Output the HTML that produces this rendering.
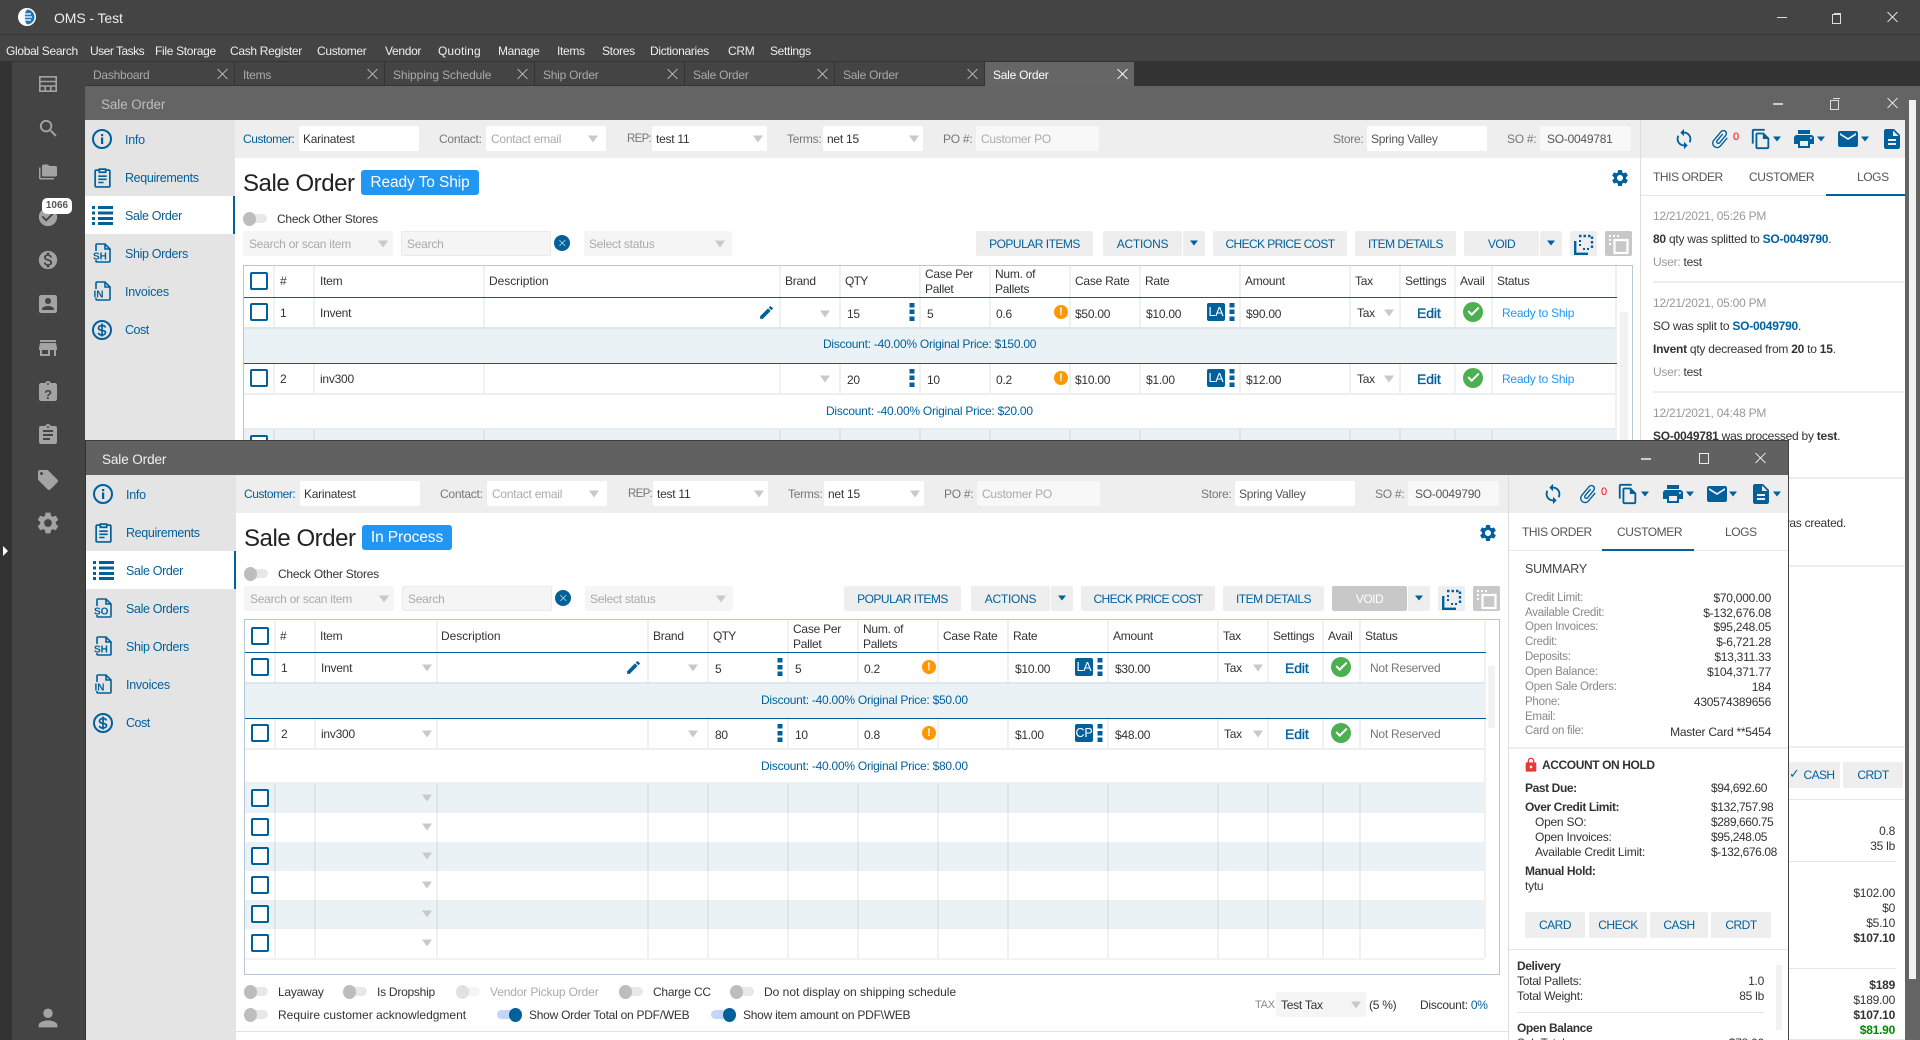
<!DOCTYPE html>
<html><head><meta charset="utf-8"><title>OMS - Test</title>
<style>
html,body{margin:0;padding:0;width:1920px;height:1040px;overflow:hidden;background:#fff}
body{position:relative;font:12px/16px "Liberation Sans",sans-serif;letter-spacing:-.25px;color:#333}
.r,.t,.ic,.a,.c,.d,.b,.k,.w,.g,.tg{position:absolute}
.t{white-space:nowrap;transform:translateY(-50%)}
.n{color:#00609c;font-size:12.5px}
.l{color:#777}.h{color:#aaa}.u{color:#00609c}
.m{color:#eee;letter-spacing:-.32px}
.tb{color:#aaa}
.ic{fill:currentColor;overflow:visible}
.bl{color:#00609c}.gy{color:#a3a3a3}
.inp{position:absolute;height:25px;background:#fff;border-radius:2px}
.a{width:0;height:0;border-left:5px solid transparent;border-right:5px solid transparent;border-top:7px solid #c9c9c9;transform:translate(-50%,-50%)}
.c{width:0;height:0;border-left:4px solid transparent;border-right:4px solid transparent;border-top:5px solid #00609c;transform:translate(-50%,-50%)}
.d{width:5px;height:18px;transform:translateX(-50%);background:repeating-linear-gradient(#00609c 0 4.5px,transparent 4.5px 6.75px)}
.b{height:25px;background:#eee;color:#00609c;display:flex;align-items:center;justify-content:center;border-radius:2px;letter-spacing:-.5px}
.k{width:14px;height:14px;border:2.5px solid #00609c;border-radius:2px;background:#fff}
.w{width:14px;height:14px;border-radius:50%;background:#ff9800;color:#fff;font:bold 11px/14px "Liberation Sans",sans-serif;text-align:center;letter-spacing:0}
.g{width:20px;height:20px;border-radius:50%;background:#4caf50}
.g:after{content:"";position:absolute;left:5px;top:5px;width:9px;height:4px;border-left:2.5px solid #fff;border-bottom:2.5px solid #fff;transform:rotate(-45deg)}
.la{position:absolute;width:18px;height:18px;background:#00609c;color:#fff;text-align:center;line-height:18px;border-radius:2px;font-size:12.5px;letter-spacing:-.2px}
.tg{width:24px;height:9px;background:#e8e8e8;border-radius:5px}
.tg:after{content:"";position:absolute;left:0;top:-2.5px;width:13px;height:14px;border-radius:50%;background:#bdbdbd}
.on{background:#c5d5f8}.on:after{left:12px;background:#00609c}
.off{opacity:.45}
.v{position:absolute;top:0;bottom:0;width:1.5px;background:rgba(0,0,0,.055)}
.x{position:absolute;width:10px;height:10px;transform:translate(-50%,-50%)}
.x:before,.x:after{content:"";position:absolute;left:4.5px;top:-2px;width:1px;height:14px;background:currentColor}
.x:before{transform:rotate(45deg)}.x:after{transform:rotate(-45deg)}
.e{color:#00609c;font-size:14px;letter-spacing:-.1px;-webkit-text-stroke:.35px #00609c}
.btxt{font-weight:bold}
.dc{color:#00609c}
.sv{color:#888;font-size:11.5px}
.pt{color:#555;letter-spacing:-.42px}
.vl{letter-spacing:-.4px}
</style></head><body>
<svg width="0" height="0" style="position:absolute">
<symbol id="sync" viewBox="0 0 24 24"><path d="M12 4V1L8 5l4 4V6c3.31 0 6 2.69 6 6 0 1.01-.25 1.97-.7 2.8l1.46 1.46C19.54 15.03 20 13.57 20 12c0-4.42-3.58-8-8-8zm0 14c-3.31 0-6-2.69-6-6 0-1.01.25-1.97.7-2.8L5.24 7.74C4.46 8.97 4 10.43 4 12c0 4.42 3.58 8 8 8v3l4-4-4-4v3z"/></symbol>
<symbol id="clip" viewBox="0 0 24 24"><path transform="rotate(40 12 12)" d="M16.5 6v11.5c0 2.21-1.79 4-4 4s-4-1.79-4-4V5c0-1.38 1.12-2.5 2.5-2.5s2.5 1.12 2.5 2.5v10.5c0 .55-.45 1-1 1s-1-.45-1-1V6H10v9.5c0 1.38 1.12 2.5 2.5 2.5s2.5-1.12 2.5-2.5V5c0-2.21-1.79-4-4-4S7 2.79 7 5v12.5c0 3.04 2.46 5.5 5.5 5.5s5.5-2.46 5.5-5.5V6h-1.5z"/></symbol>
<symbol id="copy" viewBox="0 0 24 24"><path d="M16 1H4c-1.1 0-2 .9-2 2v14h2V3h12V1zm-1 4H8c-1.1 0-1.99.9-1.99 2L6 21c0 1.1.89 2 1.99 2H19c1.1 0 2-.9 2-2V11l-6-6zM8 21V7h6v5h5v9H8z"/></symbol>
<symbol id="print" viewBox="0 0 24 24"><path d="M19 8H5c-1.66 0-3 1.34-3 3v6h4v4h12v-4h4v-6c0-1.66-1.34-3-3-3zm-3 11H8v-5h8v5zm3-7c-.55 0-1-.45-1-1s.45-1 1-1 1 .45 1 1-.45 1-1 1zm-1-9H6v4h12V3z"/></symbol>
<symbol id="mail" viewBox="0 0 24 24"><path d="M20 4H4c-1.1 0-1.99.9-1.99 2L2 18c0 1.1.9 2 2 2h16c1.1 0 2-.9 2-2V6c0-1.1-.9-2-2-2zm0 4l-8 5-8-5V6l8 5 8-5v2z"/></symbol>
<symbol id="doc" viewBox="0 0 24 24"><path d="M14 2H6c-1.1 0-1.99.9-1.99 2L4 20c0 1.1.89 2 1.99 2H18c1.1 0 2-.9 2-2V8l-6-6zm2 16H8v-2h8v2zm0-4H8v-2h8v2zm-3-5V3.5L18.5 9H13z"/></symbol>
<symbol id="gear" viewBox="0 0 24 24"><path d="M19.14 12.94c.04-.3.06-.61.06-.94 0-.32-.02-.64-.07-.94l2.03-1.58a.49.49 0 0 0 .12-.61l-1.92-3.32a.488.488 0 0 0-.59-.22l-2.39.96c-.5-.38-1.03-.7-1.62-.94l-.36-2.54a.484.484 0 0 0-.48-.41h-3.84c-.24 0-.43.17-.47.41l-.36 2.54c-.59.24-1.13.57-1.62.94l-2.39-.96c-.22-.08-.47 0-.59.22L2.74 8.87c-.12.21-.08.47.12.61l2.03 1.58c-.05.3-.09.63-.09.94s.02.64.07.94l-2.03 1.58a.49.49 0 0 0-.12.61l1.92 3.32c.12.22.37.29.59.22l2.39-.96c.5.38 1.03.7 1.62.94l.36 2.54c.05.24.24.41.48.41h3.84c.24 0 .44-.17.47-.41l.36-2.54c.59-.24 1.13-.56 1.62-.94l2.39.96c.22.08.47 0 .59-.22l1.92-3.32c.12-.22.07-.47-.12-.61l-2.01-1.58zM12 15.6c-1.98 0-3.6-1.62-3.6-3.6s1.62-3.6 3.6-3.6 3.6 1.62 3.6 3.6-1.62 3.6-3.6 3.6z"/></symbol>
<symbol id="search" viewBox="0 0 24 24"><path d="M15.5 14h-.79l-.28-.27A6.471 6.471 0 0 0 16 9.5 6.5 6.5 0 1 0 9.5 16c1.61 0 3.09-.59 4.23-1.57l.27.28v.79l5 4.99L20.49 19l-4.99-5zm-6 0C7.01 14 5 11.99 5 9.5S7.01 5 9.5 5 14 7.01 14 9.5 11.99 14 9.5 14z"/></symbol>
<symbol id="folder" viewBox="0 0 24 24"><path d="M2 6H0v5h.01L0 20c0 1.1.9 2 2 2h18v-2H2V6zm20-2h-8l-2-2H6c-1.1 0-1.99.9-1.99 2L4 16c0 1.1.9 2 2 2h16c1.1 0 2-.9 2-2V6c0-1.1-.9-2-2-2z"/></symbol>
<symbol id="chk" viewBox="0 0 24 24"><path d="M12 2C6.48 2 2 6.48 2 12s4.48 10 10 10 10-4.48 10-10S17.52 2 12 2zm-2 15l-5-5 1.41-1.41L10 14.17l7.59-7.59L19 8l-9 9z"/></symbol>
<symbol id="dol" viewBox="0 0 24 24"><path d="M12 2C6.48 2 2 6.48 2 12s4.48 10 10 10 10-4.48 10-10S17.52 2 12 2zm1.41 16.09V20h-2.67v-1.93c-1.71-.36-3.16-1.46-3.27-3.4h1.96c.1 1.05.82 1.87 2.65 1.87 1.96 0 2.4-.98 2.4-1.59 0-.83-.44-1.61-2.67-2.14-2.48-.6-4.18-1.62-4.18-3.67 0-1.72 1.39-2.84 3.11-3.21V4h2.67v1.95c1.86.45 2.79 1.86 2.85 3.39H14.3c-.05-1.11-.64-1.87-2.22-1.87-1.5 0-2.4.68-2.4 1.64 0 .84.65 1.39 2.67 1.91s4.18 1.39 4.18 3.91c-.01 1.83-1.38 2.83-3.12 3.16z"/></symbol>
<symbol id="cont" viewBox="0 0 24 24"><path d="M19 3H5c-1.1 0-2 .9-2 2v14c0 1.1.9 2 2 2h14c1.1 0 2-.9 2-2V5c0-1.1-.9-2-2-2zm-7 3c1.66 0 3 1.34 3 3s-1.34 3-3 3-3-1.34-3-3 1.34-3 3-3zm6 12H6v-1c0-2 4-3.1 6-3.1s6 1.1 6 3.1v1z"/></symbol>
<symbol id="store" viewBox="0 0 24 24"><path d="M20 4H4v2h16V4zm1 10v-2l-1-5H4l-1 5v2h1v6h10v-6h4v6h2v-6h1zm-9 4H6v-4h6v4z"/></symbol>
<symbol id="cb" viewBox="0 0 24 24"><path d="M19 3h-4.18C14.4 1.84 13.3 1 12 1c-1.3 0-2.4.84-2.82 2H5c-1.1 0-2 .9-2 2v14c0 1.1.9 2 2 2h14c1.1 0 2-.9 2-2V5c0-1.1-.9-2-2-2zm-7 0c.55 0 1 .45 1 1s-.45 1-1 1-1-.45-1-1 .45-1 1-1zm2 14H7v-2h7v2zm3-4H7v-2h10v2zm0-4H7V7h10v2z"/></symbol>
<symbol id="cq" viewBox="0 0 24 24"><path d="M19 3h-4.18C14.4 1.84 13.3 1 12 1c-1.3 0-2.4.84-2.82 2H5c-1.1 0-2 .9-2 2v14c0 1.1.9 2 2 2h14c1.1 0 2-.9 2-2V5c0-1.1-.9-2-2-2zm-7 0c.55 0 1 .45 1 1s-.45 1-1 1-1-.45-1-1 .45-1 1-1z"/></symbol>
<symbol id="tag" viewBox="0 0 24 24"><path d="M21.41 11.58l-9-9C12.05 2.22 11.55 2 11 2H4c-1.1 0-2 .9-2 2v7c0 .55.22 1.05.59 1.42l9 9c.36.36.86.58 1.41.58.55 0 1.05-.22 1.41-.59l7-7c.37-.36.59-.86.59-1.41 0-.55-.23-1.06-.59-1.42zM5.5 7C4.67 7 4 6.33 4 5.5S4.67 4 5.5 4 7 4.67 7 5.5 6.33 7 5.5 7z"/></symbol>
<symbol id="per" viewBox="0 0 24 24"><path d="M12 12c2.21 0 4-1.79 4-4s-1.79-4-4-4-4 1.79-4 4 1.79 4 4 4zm0 2c-2.67 0-8 1.34-8 4v2h16v-2c0-2.66-5.33-4-8-4z"/></symbol>
<symbol id="pen" viewBox="0 0 24 24"><path d="M3 17.25V21h3.75L17.81 9.94l-3.75-3.75L3 17.25zM20.71 7.04a1 1 0 0 0 0-1.41l-2.34-2.34a1 1 0 0 0-1.41 0l-1.83 1.83 3.75 3.75 1.83-1.83z"/></symbol>
<symbol id="lock" viewBox="0 0 24 24"><path d="M18 8h-1V6c0-2.76-2.24-5-5-5S7 3.24 7 6v2H6c-1.1 0-2 .9-2 2v10c0 1.1.9 2 2 2h12c1.1 0 2-.9 2-2V10c0-1.1-.9-2-2-2zm-6 9c-1.1 0-2-.9-2-2s.9-2 2-2 2 .9 2 2-.9 2-2 2zm3.1-9H8.9V6c0-1.71 1.39-3.1 3.1-3.1 1.71 0 3.1 1.39 3.1 3.1v2z"/></symbol>
<symbol id="info" viewBox="0 0 20 20"><circle cx="10" cy="10" r="9" fill="none" stroke="currentColor" stroke-width="2"/><rect x="9" y="8.5" width="2.2" height="6.5"/><rect x="9" y="5" width="2.2" height="2.2"/></symbol>
<symbol id="req" viewBox="0 0 16 20"><path fill="none" stroke="currentColor" stroke-width="1.6" d="M5 3H2a1 1 0 0 0-1 1v14a1 1 0 0 0 1 1h12a1 1 0 0 0 1-1V4a1 1 0 0 0-1-1h-3M5 2h6v3H5z"/><path d="M4 8h8v1.5H4zM4 11h8v1.5H4zM4 14h5v1.5H4z"/></symbol>
<symbol id="list" viewBox="0 0 21 20"><path d="M0 1h3v3H0zM6 1h15v3H6zM0 6.5h3v3H0zM6 6.5h15v3H6zM0 12h3v3H0zM6 12h15v3H6zM0 17h3v3H0zM6 17h15v3H6z"/></symbol>
<symbol id="fd" viewBox="0 0 17 20"><path fill="none" stroke="currentColor" stroke-width="1.6" d="M2 8V2a1 1 0 0 1 1-1h8l5 5v12a1 1 0 0 1-1 1H3a1 1 0 0 1-1-1v-1M11 1v5h5"/></symbol>
<symbol id="cost" viewBox="0 0 20 20"><circle cx="10" cy="10" r="9" fill="none" stroke="currentColor" stroke-width="2"/><path fill="none" stroke="currentColor" stroke-width="1.7" d="M13.5 7.5C13 6 11.5 5.5 10 5.5 8 5.500 6.500 6.500 6.500 8c0 3.500 7 1.500 7 4.500 0 1.500-1.500 2.500-3.500 2.500-1.800 0-3.200-.8-3.700-2.200M10 3.500v13"/></symbol>
<symbol id="sel" viewBox="0 0 27 25"><path fill="none" stroke="#00609c" stroke-width="2.400" stroke-dasharray="2.500 2" d="M9 5h13v13"/><path fill="none" stroke="#00609c" stroke-width="2.400" d="M5.200 10v12.800H18"/><path fill="#00609c" d="M9 9h2v2H9zM9 13h2v2H9zM13 17h2v2h-2zM17 17h2v2h-2z"/></symbol>
<symbol id="sel2" viewBox="0 0 27 25"><path fill="#fff" d="M4 4h2v2H4zM8 4h2v2H8zM12 4h2v2h-2zM4 8h2v2H4zM4 12h2v2H4z"/><path fill="none" stroke="#fff" stroke-width="2.200" d="M9.500 9h13v13h-13z"/></symbol>
</svg>

<!-- App chrome -->
<div class="r" style="left:0;top:0;width:1920px;height:62px;background:#444"></div>
<div class="r" style="left:0;top:34px;width:1920px;height:1px;background:#333"></div>
<svg class="ic" style="left:18px;top:8px;width:18px;height:18px" viewBox="0 0 18 18"><circle cx="9" cy="9" r="9" fill="#fff"/><path d="M9 1.500a7.500 7.500 0 0 1 0 15 9 9 0 0 1-2-7.500 9 9 0 0 1 2-7.500z" fill="#1b78c2"/><path d="M7 6h6M6 9h8M7 12h6" stroke="#fff" stroke-width="1.200"/></svg>
<div class="t" style="left:54px;top:18px;font-size:14px;color:#eee;letter-spacing:-.1px">OMS - Test</div>
<div class="t m" style="left:6px;top:51px">Global Search</div>
<div class="t m" style="left:90px;top:51px;letter-spacing:-.5px">User Tasks</div>
<div class="t m" style="left:155px;top:51px">File Storage</div>
<div class="t m" style="left:230px;top:51px">Cash Register</div>
<div class="t m" style="left:317px;top:51px">Customer</div>
<div class="t m" style="left:385px;top:51px">Vendor</div>
<div class="t m" style="left:438px;top:51px;letter-spacing:.1px">Quoting</div>
<div class="t m" style="left:498px;top:51px">Manage</div>
<div class="t m" style="left:557px;top:51px">Items</div>
<div class="t m" style="left:602px;top:51px">Stores</div>
<div class="t m" style="left:650px;top:51px">Dictionaries</div>
<div class="t m" style="left:728px;top:51px">CRM</div>
<div class="t m" style="left:770px;top:51px">Settings</div>
<div class="r" style="left:1777px;top:16.500px;width:10px;height:1.500px;background:#ddd"></div>
<div class="r" style="left:1832px;top:14px;width:7px;height:8px;border:1px solid #ddd;background:#444"></div>
<div class="r" style="left:1834px;top:12.500px;width:7px;height:1px;background:#ddd"></div>
<div class="x" style="left:1892px;top:17px;color:#eee"></div>

<!-- Tab strip -->
<div class="r" style="left:0;top:61px;width:1920px;height:25px;background:#333"></div>
<div class="r" style="left:85px;top:62px;width:149px;height:23px;background:#444"></div>
<div class="r" style="left:235px;top:62px;width:149px;height:23px;background:#444"></div>
<div class="r" style="left:385px;top:62px;width:149px;height:23px;background:#444"></div>
<div class="r" style="left:535px;top:62px;width:149px;height:23px;background:#444"></div>
<div class="r" style="left:685px;top:62px;width:149px;height:23px;background:#444"></div>
<div class="r" style="left:835px;top:62px;width:149px;height:23px;background:#444"></div>
<div class="r" style="left:985px;top:62px;width:149px;height:24px;background:#666"></div>
<div class="t tb" style="left:93px;top:75px">Dashboard</div><div class="x" style="left:222px;top:74px;color:#bbb"></div>
<div class="t tb" style="left:243px;top:75px">Items</div><div class="x" style="left:372px;top:74px;color:#bbb"></div>
<div class="t tb" style="left:393px;top:75px;letter-spacing:-.1px">Shipping Schedule</div><div class="x" style="left:522px;top:74px;color:#bbb"></div>
<div class="t tb" style="left:543px;top:75px">Ship Order</div><div class="x" style="left:672px;top:74px;color:#bbb"></div>
<div class="t tb" style="left:693px;top:75px">Sale Order</div><div class="x" style="left:822px;top:74px;color:#bbb"></div>
<div class="t tb" style="left:843px;top:75px">Sale Order</div><div class="x" style="left:972px;top:74px;color:#bbb"></div>
<div class="t" style="left:993px;top:75px;color:#fff">Sale Order</div><div class="x" style="left:1122px;top:74px;color:#fff"></div>

<!-- Left rail -->
<div class="r" style="left:0;top:61px;width:12px;height:979px;background:#333"></div>
<div class="r" style="left:12px;top:61px;width:73px;height:979px;background:#444"></div>
<div class="r" style="left:12px;top:61px;width:73px;height:1px;background:#333"></div>
<svg class="ic gy" style="left:39px;top:76px;width:18px;height:16px" viewBox="0 0 18 16"><path fill="none" stroke="currentColor" stroke-width="1.600" d="M.8.8h16.400v14.400H.8zM.8 5.500h16.400M.8 10h16.400M6.200 10v5M11.800 10v5"/></svg>
<svg class="ic gy" style="left:37px;top:117px;width:23px;height:23px"><use href="#search"/></svg>
<svg class="ic gy" style="left:39px;top:163px;width:18px;height:18px"><use href="#folder"/></svg>
<svg class="ic gy" style="left:37px;top:206px;width:22px;height:22px"><use href="#chk"/></svg>
<div class="r" style="left:42px;top:198px;width:30px;height:16px;background:#fff;border-radius:5px;color:#555;font-size:10px;line-height:16px;text-align:center;font-weight:bold;letter-spacing:0">1066</div>
<svg class="ic gy" style="left:37px;top:249px;width:22px;height:22px"><use href="#dol"/></svg>
<svg class="ic gy" style="left:36px;top:292px;width:24px;height:24px"><use href="#cont"/></svg>
<svg class="ic gy" style="left:36px;top:336px;width:24px;height:24px"><use href="#store"/></svg>
<svg class="ic gy" style="left:36px;top:380px;width:24px;height:24px" viewBox="0 0 24 24"><use href="#cq" width="24" height="24"/><text x="12" y="19" font-size="13" font-weight="bold" text-anchor="middle" font-family="Liberation Sans" fill="#444">?</text></svg>
<svg class="ic gy" style="left:36px;top:423px;width:24px;height:24px"><use href="#cb"/></svg>
<svg class="ic gy" style="left:36px;top:468px;width:24px;height:24px"><use href="#tag"/></svg>
<svg class="ic gy" style="left:35px;top:510px;width:26px;height:26px"><use href="#gear"/></svg>
<svg class="ic gy" style="left:34px;top:1004px;width:28px;height:28px"><use href="#per"/></svg>
<div class="r" style="left:3px;top:546px;width:0;height:0;border-left:5px solid #fff;border-top:5px solid transparent;border-bottom:5px solid transparent"></div>

<!-- WINDOW 1 -->
<div class="r" style="left:85px;top:86px;width:1820px;height:34px;background:#646464"></div>
<div class="t" style="left:101px;top:105px;font-size:13.500px;color:#bdbdbd;letter-spacing:-.1px">Sale Order</div>
<div class="r" style="left:1773px;top:103px;width:10px;height:1.500px;background:#ccc"></div>
<div class="r" style="left:1830px;top:100px;width:7px;height:8px;border:1px solid #ddd"></div>
<div class="r" style="left:1833px;top:98px;width:7px;height:1px;background:#ddd"></div>
<div class="x" style="left:1892px;top:103px;color:#eee"></div>
<div class="r" style="left:1905px;top:86px;width:15px;height:954px;background:#646464"></div>
<div class="r" style="left:1909px;top:100px;width:7px;height:879px;background:#f2f2f2"></div>
<div class="r" style="left:85px;top:120px;width:150px;height:340px;background:#e4e4e4"></div>
<div class="r" style="left:85px;top:196px;width:150px;height:38px;background:#fff"></div>
<div class="r" style="left:233px;top:196px;width:2px;height:38px;background:#00609c"></div>
<svg class="ic bl" style="left:92px;top:129px;width:20px;height:20px"><use href="#info"/></svg>
<div class="t n" style="left:125px;top:140px">Info</div>
<svg class="ic bl" style="left:94px;top:167px;width:17px;height:21px"><use href="#req"/></svg>
<div class="t n" style="left:125px;top:178px;letter-spacing:-.35px">Requirements</div>
<svg class="ic bl" style="left:92px;top:205px;width:21px;height:20px"><use href="#list"/></svg>
<div class="t n" style="left:125px;top:216px;letter-spacing:-.35px">Sale Order</div>
<svg class="ic bl" style="left:94px;top:243px;width:17px;height:20px" viewBox="0 0 17 20"><use href="#fd" width="17" height="20"/><rect x="-1" y="8" width="13" height="9" fill="#e4e4e4"/><text x="-1" y="16.500" font-size="10" font-weight="bold" letter-spacing="0" font-family="Liberation Sans" fill="#00609c">SH</text></svg>
<div class="t n" style="left:125px;top:254px;letter-spacing:-.35px">Ship Orders</div>
<svg class="ic bl" style="left:94px;top:281px;width:17px;height:20px" viewBox="0 0 17 20"><use href="#fd" width="17" height="20"/><rect x="-1" y="8" width="13" height="9" fill="#e4e4e4"/><text x="-.5" y="16.500" font-size="10" font-weight="bold" letter-spacing="0" font-family="Liberation Sans" fill="#00609c">IN</text></svg>
<div class="t n" style="left:125px;top:292px">Invoices</div>
<svg class="ic bl" style="left:92px;top:320px;width:20px;height:20px"><use href="#cost"/></svg>
<div class="t n" style="left:125px;top:330px;letter-spacing:-.5px">Cost</div>

<div class="r" style="left:235px;top:120px;width:1670px;height:38px;background:#eee"></div>
<div class="r" style="left:235px;top:158px;width:1670px;height:302px;background:#fff"></div>
<div class="r" style="left:1640px;top:120px;width:1px;height:340px;background:#dcdcdc"></div>
<div class="t u" style="left:243px;top:139px;letter-spacing:-.45px">Customer:</div>
<div class="inp" style="left:299px;top:126px;width:120px"></div>
<div class="t" style="left:303px;top:139px">Karinatest</div>
<div class="t l" style="left:439px;top:139px">Contact:</div>
<div class="inp" style="left:486px;top:126px;width:120px"></div>
<div class="t h" style="left:491px;top:139px">Contact email</div><div class="a" style="left:593px;top:139px"></div>
<div class="t l" style="left:627px;top:139px;letter-spacing:-.7px;font-size:11.500px">REP:</div>
<div class="inp" style="left:652px;top:126px;width:115px"></div>
<div class="t" style="left:656px;top:139px">test 11</div><div class="a" style="left:758px;top:139px"></div>
<div class="t l" style="left:787px;top:139px">Terms:</div>
<div class="inp" style="left:823px;top:126px;width:100px"></div>
<div class="t" style="left:827px;top:139px">net 15</div><div class="a" style="left:914px;top:139px"></div>
<div class="t l" style="left:943px;top:139px">PO #:</div>
<div class="inp" style="left:976px;top:126px;width:123px;background:#f8f8f8"></div>
<div class="t h" style="left:981px;top:139px">Customer PO</div>
<div class="t l" style="left:1333px;top:139px">Store:</div>
<div class="inp" style="left:1367px;top:126px;width:120px"></div>
<div class="t" style="left:1371px;top:139px;color:#555">Spring Valley</div>
<div class="t l" style="left:1507px;top:139px">SO #:</div>
<div class="inp" style="left:1540px;top:126px;width:91px;background:#f8f8f8"></div>
<div class="t" style="left:1547px;top:139px;color:#555">SO-0049781</div>
<svg class="ic bl" style="left:1673px;top:128px;width:22px;height:22px"><use href="#sync"/></svg>
<svg class="ic bl" style="left:1709px;top:128px;width:22px;height:22px"><use href="#clip"/></svg>
<div class="t" style="left:1733px;top:137px;color:#f00;font-size:11px">0</div>
<svg class="ic bl" style="left:1750px;top:128px;width:22px;height:22px"><use href="#copy"/></svg><div class="c" style="left:1777px;top:139px"></div>
<svg class="ic bl" style="left:1792px;top:127px;width:24px;height:24px"><use href="#print"/></svg><div class="c" style="left:1821px;top:139px"></div>
<svg class="ic bl" style="left:1836px;top:126px;width:24px;height:26px"><use href="#mail"/></svg><div class="c" style="left:1865px;top:139px"></div>
<svg class="ic bl" style="left:1880px;top:127px;width:24px;height:24px"><use href="#doc"/></svg>

<div class="t" style="left:243px;top:184px;font-size:24px;line-height:28px;letter-spacing:-.45px;color:#222">Sale Order</div>
<div class="r" style="left:361px;top:170px;width:118px;height:25px;background:#2196f3;border-radius:3px;color:#fff;font-size:15.500px;line-height:26px;text-align:center;letter-spacing:-.1px">Ready To Ship</div>
<svg class="ic bl" style="left:1610px;top:168px;width:20px;height:20px"><use href="#gear"/></svg>
<div class="tg" style="left:243px;top:214px"></div>
<div class="t" style="left:277px;top:219px">Check Other Stores</div>
<div class="r" style="left:243px;top:231px;width:150px;height:25px;background:#f5f5f5;border-radius:2px"></div>
<div class="t h" style="left:249px;top:244px">Search or scan item</div><div class="a" style="left:383px;top:244px"></div>
<div class="r" style="left:401px;top:231px;width:148px;height:23px;background:#f5f5f5;border:1px solid #eaeaea;border-radius:2px"></div>
<div class="t h" style="left:407px;top:244px">Search</div>
<div class="r" style="left:554px;top:235px;width:16px;height:16px;border-radius:50%;background:#00609c"></div><div class="x" style="left:562px;top:243px;color:#fff;transform:translate(-50%,-50%) scale(.6)"></div>
<div class="r" style="left:584px;top:231px;width:148px;height:25px;background:#f5f5f5;border-radius:2px"></div>
<div class="t h" style="left:589px;top:244px">Select status</div><div class="a" style="left:720px;top:244px"></div>
<div class="b" style="left:976px;top:231px;width:117px">POPULAR ITEMS</div>
<div class="b" style="left:1103px;top:231px;width:79px;letter-spacing:-.25px">ACTIONS</div>
<div class="b" style="left:1183px;top:231px;width:22px"><span class="c" style="left:11px;top:12px"></span></div>
<div class="b" style="left:1213px;top:231px;width:134px;letter-spacing:-.6px">CHECK PRICE COST</div>
<div class="b" style="left:1355px;top:231px;width:101px">ITEM DETAILS</div>
<div class="b" style="left:1464px;top:231px;width:75px">VOID</div>
<div class="b" style="left:1540px;top:231px;width:22px"><span class="c" style="left:11px;top:12px"></span></div>
<div class="b" style="left:1570px;top:231px;width:27px"><svg class="ic" style="left:0;top:0;width:27px;height:25px"><use href="#sel"/></svg></div>
<div class="b" style="left:1605px;top:231px;width:27px;background:#c8c8c8"><svg class="ic" style="left:0;top:0;width:27px;height:25px"><use href="#sel2"/></svg></div>

<!-- table 1 -->
<div class="r" style="left:243px;top:265px;width:1388px;height:195px;border:1px solid #b4c8da;border-bottom:0"></div>
<div class="r" style="left:244px;top:428px;width:1371px;height:32px;background:#ebf2f6"></div>
<div class="r" style="left:0;top:266px;width:1920px;height:174px"><i class="v" style="left:273px"></i><i class="v" style="left:313px"></i><i class="v" style="left:483px"></i><i class="v" style="left:779px"></i><i class="v" style="left:839px"></i><i class="v" style="left:919px"></i><i class="v" style="left:989px"></i><i class="v" style="left:1069px"></i><i class="v" style="left:1139px"></i><i class="v" style="left:1239px"></i><i class="v" style="left:1349px"></i><i class="v" style="left:1399px"></i><i class="v" style="left:1454px"></i><i class="v" style="left:1491px"></i><i class="v" style="left:1615px"></i></div>
<div class="r" style="left:244px;top:329px;width:1371px;height:34px;background:#ebf2f6"></div>
<div class="r" style="left:244px;top:395px;width:1371px;height:33px;background:#fff"></div>
<div class="r" style="left:244px;top:297px;width:1373px;height:1px;background:#00609c"></div>
<div class="r" style="left:244px;top:363px;width:1373px;height:1px;background:#00609c"></div>
<div class="r" style="left:244px;top:327px;width:1371px;height:1.500px;background:#dfe6ec"></div>
<div class="r" style="left:244px;top:393px;width:1371px;height:1.500px;background:#eceff2"></div>
<div class="r" style="left:244px;top:428px;width:1371px;height:1.500px;background:#e6ebf0"></div>
<div class="r" style="left:1620px;top:312px;width:8px;height:148px;background:#f2f2f2"></div>
<div class="k" style="left:250px;top:272px"></div><div class="k" style="left:250px;top:303px"></div><div class="k" style="left:250px;top:369px"></div><div class="k" style="left:250px;top:435px"></div>
<div class="t" style="left:280px;top:281px">#</div><div class="t" style="left:320px;top:281px">Item</div><div class="t" style="left:489px;top:281px;letter-spacing:-.05px">Description</div><div class="t" style="left:785px;top:281px">Brand</div><div class="t" style="left:845px;top:281px;letter-spacing:-.7px">QTY</div><div class="t" style="left:925px;top:274px">Case Per</div><div class="t" style="left:925px;top:289px">Pallet</div><div class="t" style="left:995px;top:274px">Num. of</div><div class="t" style="left:995px;top:289px">Pallets</div><div class="t" style="left:1075px;top:281px">Case Rate</div><div class="t" style="left:1145px;top:281px">Rate</div><div class="t" style="left:1245px;top:281px">Amount</div><div class="t" style="left:1355px;top:281px">Tax</div><div class="t" style="left:1405px;top:281px">Settings</div><div class="t" style="left:1460px;top:281px">Avail</div><div class="t" style="left:1497px;top:281px">Status</div>
<div class="t" style="left:280px;top:313px">1</div><div class="t" style="left:320px;top:313px">Invent</div>
<svg class="ic bl" style="left:758px;top:304px;width:17px;height:17px"><use href="#pen"/></svg>
<div class="a" style="left:825px;top:314px"></div>
<div class="t" style="left:847px;top:314px">15</div><div class="d" style="left:912px;top:303px"></div>
<div class="t" style="left:927px;top:314px">5</div><div class="t" style="left:996px;top:314px">0.6</div><div class="w" style="left:1054px;top:305px">!</div>
<div class="t" style="left:1075px;top:314px">$50.00</div><div class="t" style="left:1146px;top:314px">$10.00</div><div class="la" style="left:1207px;top:303px">LA</div><div class="d" style="left:1232px;top:303px"></div><div class="t" style="left:1246px;top:314px">$90.00</div>
<div class="t" style="left:1357px;top:313px">Tax</div><div class="a" style="left:1389px;top:313px"></div><div class="t e" style="left:1417px;top:313px">Edit</div><div class="g" style="left:1463px;top:302px"></div><div class="t" style="left:1502px;top:313px;color:#2196f3">Ready to Ship</div>
<div class="t dc" style="left:823px;top:344px">Discount: -40.00% Original Price: $150.00</div>
<div class="t" style="left:280px;top:379px">2</div><div class="t" style="left:320px;top:379px">inv300</div>
<div class="a" style="left:825px;top:379px"></div>
<div class="t" style="left:847px;top:380px">20</div><div class="d" style="left:912px;top:369px"></div>
<div class="t" style="left:927px;top:380px">10</div><div class="t" style="left:996px;top:380px">0.2</div><div class="w" style="left:1054px;top:371px">!</div>
<div class="t" style="left:1075px;top:380px">$10.00</div><div class="t" style="left:1146px;top:380px">$1.00</div><div class="la" style="left:1207px;top:369px">LA</div><div class="d" style="left:1232px;top:369px"></div><div class="t" style="left:1246px;top:380px">$12.00</div>
<div class="t" style="left:1357px;top:379px">Tax</div><div class="a" style="left:1389px;top:379px"></div><div class="t e" style="left:1417px;top:379px">Edit</div><div class="g" style="left:1463px;top:368px"></div><div class="t" style="left:1502px;top:379px;color:#2196f3">Ready to Ship</div>
<div class="t dc" style="left:826px;top:411px">Discount: -40.00% Original Price: $20.00</div>

<!-- right panel win 1 -->
<div class="t pt" style="left:1653px;top:177px">THIS ORDER</div>
<div class="t pt" style="left:1749px;top:177px">CUSTOMER</div>
<div class="t pt" style="left:1857px;top:177px">LOGS</div>
<div class="r" style="left:1641px;top:195px;width:264px;height:1px;background:#e6e6e6"></div>
<div class="r" style="left:1826px;top:194px;width:79px;height:2px;background:#00609c"></div>
<div class="t" style="left:1653px;top:216px;color:#999">12/21/2021, 05:26 PM</div>
<div class="t" style="left:1653px;top:239px"><b>80</b> qty was splitted to <b class="u">SO-0049790</b>.</div>
<div class="t" style="left:1653px;top:262px"><span style="color:#999">User:</span> test</div>
<div class="r" style="left:1653px;top:281px;width:252px;height:2px;background:#eee"></div>
<div class="t" style="left:1653px;top:303px;color:#999">12/21/2021, 05:00 PM</div>
<div class="t" style="left:1653px;top:326px">SO was split to <b class="u">SO-0049790</b>.</div>
<div class="t" style="left:1653px;top:349px"><b>Invent</b> qty decreased from <b>20</b> to <b>15</b>.</div>
<div class="t" style="left:1653px;top:372px"><span style="color:#999">User:</span> test</div>
<div class="r" style="left:1653px;top:391px;width:252px;height:2px;background:#eee"></div>
<div class="t" style="left:1653px;top:413px;color:#999">12/21/2021, 04:48 PM</div>
<div class="t" style="left:1653px;top:436px"><b>SO-0049781</b> was processed by <b>test</b>.</div>
<div class="r" style="left:1653px;top:477px;width:252px;height:2px;background:#eee"></div>
<div class="t" style="right:74px;top:523px">SO-0049781 was created.</div>
<div class="r" style="left:1653px;top:565px;width:252px;height:2px;background:#eee"></div>
<div class="r" style="left:1653px;top:746px;width:252px;height:2px;background:#eee"></div>
<div class="b" style="left:1780px;top:762px;width:60px;height:26px"><span style="margin-left:18px;letter-spacing:-.6px">CASH</span></div>
<div class="t u" style="left:1789px;top:774px;font-size:13px">✓</div>
<div class="b" style="left:1843px;top:762px;width:60px;height:26px">CRDT</div>
<div class="r" style="left:1653px;top:799px;width:252px;height:1px;background:#e6e6e6"></div>
<div class="t" style="right:25px;top:831px">0.8</div><div class="t" style="right:25px;top:846px">35 lb</div>
<div class="r" style="left:1653px;top:861px;width:243px;height:1px;background:#e6e6e6"></div>
<div class="t" style="right:25px;top:893px">$102.00</div><div class="t" style="right:25px;top:908px">$0</div><div class="t" style="right:25px;top:923px">$5.10</div><div class="t btxt" style="right:25px;top:938px">$107.10</div>
<div class="r" style="left:1653px;top:968px;width:243px;height:1px;background:#e6e6e6"></div>
<div class="t btxt" style="right:25px;top:985px">$189</div><div class="t" style="right:25px;top:1000px">$189.00</div><div class="t btxt" style="right:25px;top:1015px">$107.10</div><div class="t btxt" style="right:25px;top:1030px;color:#008a00">$81.90</div>
<div class="r" style="left:1653px;top:1039px;width:252px;height:1px;background:#e6e6e6"></div>

<!-- WINDOW 2 -->
<div class="r" style="left:86px;top:440px;width:1703px;height:600px;background:#fff"></div>
<div class="r" style="left:86px;top:440px;width:1703px;height:35px;background:#616161;border-top:1px solid #3c3c3c;box-sizing:border-box"></div>
<div class="r" style="left:1788px;top:440px;width:1px;height:600px;background:#444"></div>
<div class="r" style="left:85px;top:440px;width:1px;height:600px;background:#333"></div>
<div class="t" style="left:102px;top:460px;font-size:13.500px;color:#f0f0f0;letter-spacing:-.1px">Sale Order</div>
<div class="r" style="left:1641px;top:458px;width:10px;height:1.500px;background:#ccc"></div>
<div class="r" style="left:1699px;top:453px;width:8px;height:9px;border:1px solid #eee"></div>
<div class="x" style="left:1760px;top:458px;color:#eee"></div>
<div class="r" style="left:86px;top:475px;width:150px;height:565px;background:#e4e4e4"></div>
<div class="r" style="left:86px;top:551px;width:150px;height:38px;background:#fff"></div>
<div class="r" style="left:234px;top:551px;width:2px;height:38px;background:#00609c"></div>
<svg class="ic bl" style="left:93px;top:484px;width:20px;height:20px"><use href="#info"/></svg>
<div class="t n" style="left:126px;top:495px">Info</div>
<svg class="ic bl" style="left:95px;top:522px;width:17px;height:21px"><use href="#req"/></svg>
<div class="t n" style="left:126px;top:533px;letter-spacing:-.35px">Requirements</div>
<svg class="ic bl" style="left:93px;top:560px;width:21px;height:20px"><use href="#list"/></svg>
<div class="t n" style="left:126px;top:571px;letter-spacing:-.35px">Sale Order</div>
<svg class="ic bl" style="left:95px;top:598px;width:17px;height:20px" viewBox="0 0 17 20"><use href="#fd" width="17" height="20"/><rect x="-1" y="8" width="13" height="9" fill="#e4e4e4"/><text x="-1" y="16.500" font-size="10" font-weight="bold" letter-spacing="0" font-family="Liberation Sans" fill="#00609c">SO</text></svg>
<div class="t n" style="left:126px;top:609px;letter-spacing:-.35px">Sale Orders</div>
<svg class="ic bl" style="left:95px;top:636px;width:17px;height:20px" viewBox="0 0 17 20"><use href="#fd" width="17" height="20"/><rect x="-1" y="8" width="13" height="9" fill="#e4e4e4"/><text x="-1" y="16.500" font-size="10" font-weight="bold" letter-spacing="0" font-family="Liberation Sans" fill="#00609c">SH</text></svg>
<div class="t n" style="left:126px;top:647px;letter-spacing:-.35px">Ship Orders</div>
<svg class="ic bl" style="left:95px;top:674px;width:17px;height:20px" viewBox="0 0 17 20"><use href="#fd" width="17" height="20"/><rect x="-1" y="8" width="13" height="9" fill="#e4e4e4"/><text x="-.5" y="16.500" font-size="10" font-weight="bold" letter-spacing="0" font-family="Liberation Sans" fill="#00609c">IN</text></svg>
<div class="t n" style="left:126px;top:685px">Invoices</div>
<svg class="ic bl" style="left:93px;top:713px;width:20px;height:20px"><use href="#cost"/></svg>
<div class="t n" style="left:126px;top:723px;letter-spacing:-.5px">Cost</div>

<div class="r" style="left:236px;top:475px;width:1552px;height:38px;background:#eee"></div>
<div class="r" style="left:1508px;top:475px;width:1px;height:565px;background:#dcdcdc"></div>
<div class="t u" style="left:244px;top:494px;letter-spacing:-.45px">Customer:</div>
<div class="inp" style="left:300px;top:481px;width:120px"></div>
<div class="t" style="left:304px;top:494px">Karinatest</div>
<div class="t l" style="left:440px;top:494px">Contact:</div>
<div class="inp" style="left:487px;top:481px;width:120px"></div>
<div class="t h" style="left:492px;top:494px">Contact email</div><div class="a" style="left:594px;top:494px"></div>
<div class="t l" style="left:628px;top:494px;letter-spacing:-.7px;font-size:11.500px">REP:</div>
<div class="inp" style="left:653px;top:481px;width:115px"></div>
<div class="t" style="left:657px;top:494px">test 11</div><div class="a" style="left:759px;top:494px"></div>
<div class="t l" style="left:788px;top:494px">Terms:</div>
<div class="inp" style="left:824px;top:481px;width:100px"></div>
<div class="t" style="left:828px;top:494px">net 15</div><div class="a" style="left:915px;top:494px"></div>
<div class="t l" style="left:944px;top:494px">PO #:</div>
<div class="inp" style="left:977px;top:481px;width:123px;background:#f8f8f8"></div>
<div class="t h" style="left:982px;top:494px">Customer PO</div>
<div class="t l" style="left:1201px;top:494px">Store:</div>
<div class="inp" style="left:1235px;top:481px;width:120px"></div>
<div class="t" style="left:1239px;top:494px;color:#555">Spring Valley</div>
<div class="t l" style="left:1375px;top:494px">SO #:</div>
<div class="inp" style="left:1408px;top:481px;width:91px;background:#f8f8f8"></div>
<div class="t" style="left:1415px;top:494px;color:#555">SO-0049790</div>
<svg class="ic bl" style="left:1542px;top:483px;width:22px;height:22px"><use href="#sync"/></svg>
<svg class="ic bl" style="left:1577px;top:483px;width:22px;height:22px"><use href="#clip"/></svg>
<div class="t" style="left:1601px;top:492px;color:#f00;font-size:11px">0</div>
<svg class="ic bl" style="left:1617px;top:483px;width:22px;height:22px"><use href="#copy"/></svg><div class="c" style="left:1645px;top:494px"></div>
<svg class="ic bl" style="left:1661px;top:482px;width:24px;height:24px"><use href="#print"/></svg><div class="c" style="left:1690px;top:494px"></div>
<svg class="ic bl" style="left:1705px;top:481px;width:24px;height:26px"><use href="#mail"/></svg><div class="c" style="left:1733px;top:494px"></div>
<svg class="ic bl" style="left:1749px;top:482px;width:24px;height:24px"><use href="#doc"/></svg><div class="c" style="left:1777px;top:494px"></div>

<div class="t" style="left:244px;top:539px;font-size:24px;line-height:28px;letter-spacing:-.45px;color:#222">Sale Order</div>
<div class="r" style="left:362px;top:525px;width:90px;height:25px;background:#2196f3;border-radius:3px;color:#fff;font-size:15.500px;line-height:26px;text-align:center;letter-spacing:-.1px">In Process</div>
<svg class="ic bl" style="left:1478px;top:523px;width:20px;height:20px"><use href="#gear"/></svg>
<div class="tg" style="left:244px;top:569px"></div>
<div class="t" style="left:278px;top:574px">Check Other Stores</div>
<div class="r" style="left:244px;top:586px;width:150px;height:25px;background:#f5f5f5;border-radius:2px"></div>
<div class="t h" style="left:250px;top:599px">Search or scan item</div><div class="a" style="left:384px;top:599px"></div>
<div class="r" style="left:402px;top:586px;width:148px;height:23px;background:#f5f5f5;border:1px solid #eaeaea;border-radius:2px"></div>
<div class="t h" style="left:408px;top:599px">Search</div>
<div class="r" style="left:555px;top:590px;width:16px;height:16px;border-radius:50%;background:#00609c"></div><div class="x" style="left:563px;top:598px;color:#fff;transform:translate(-50%,-50%) scale(.6)"></div>
<div class="r" style="left:585px;top:586px;width:148px;height:25px;background:#f5f5f5;border-radius:2px"></div>
<div class="t h" style="left:590px;top:599px">Select status</div><div class="a" style="left:721px;top:599px"></div>
<div class="b" style="left:844px;top:586px;width:117px">POPULAR ITEMS</div>
<div class="b" style="left:971px;top:586px;width:79px;letter-spacing:-.25px">ACTIONS</div>
<div class="b" style="left:1051px;top:586px;width:22px"><span class="c" style="left:11px;top:12px"></span></div>
<div class="b" style="left:1081px;top:586px;width:134px;letter-spacing:-.6px">CHECK PRICE COST</div>
<div class="b" style="left:1223px;top:586px;width:101px">ITEM DETAILS</div>
<div class="b" style="left:1332px;top:586px;width:75px;background:#c8c8c8;color:#fff">VOID</div>
<div class="b" style="left:1408px;top:586px;width:22px"><span class="c" style="left:11px;top:12px"></span></div>
<div class="b" style="left:1438px;top:586px;width:27px"><svg class="ic" style="left:0;top:0;width:27px;height:25px"><use href="#sel"/></svg></div>
<div class="b" style="left:1473px;top:586px;width:27px;background:#c8c8c8"><svg class="ic" style="left:0;top:0;width:27px;height:25px"><use href="#sel2"/></svg></div>

<!-- table 2 -->
<div class="r" style="left:244px;top:619px;width:1256px;height:356px;border:1px solid #b4c8da;box-sizing:border-box"></div>
<div class="r" style="left:245px;top:783px;width:1239px;height:30px;background:#ebf2f6"></div>
<div class="r" style="left:245px;top:842px;width:1239px;height:29px;background:#ebf2f6"></div>
<div class="r" style="left:245px;top:900px;width:1239px;height:29px;background:#ebf2f6"></div>
<div class="r" style="left:0;top:620px;width:1920px;height:338px"><i class="v" style="left:274px"></i><i class="v" style="left:314px"></i><i class="v" style="left:436px"></i><i class="v" style="left:647px"></i><i class="v" style="left:707px"></i><i class="v" style="left:787px"></i><i class="v" style="left:857px"></i><i class="v" style="left:937px"></i><i class="v" style="left:1007px"></i><i class="v" style="left:1107px"></i><i class="v" style="left:1217px"></i><i class="v" style="left:1267px"></i><i class="v" style="left:1322px"></i><i class="v" style="left:1359px"></i><i class="v" style="left:1484px"></i></div>
<div class="r" style="left:245px;top:684px;width:1239px;height:34px;background:#ebf2f6"></div>
<div class="r" style="left:245px;top:750px;width:1239px;height:33px;background:#fff"></div>
<div class="r" style="left:245px;top:652px;width:1241px;height:1px;background:#00609c"></div>
<div class="r" style="left:245px;top:718px;width:1241px;height:1px;background:#00609c"></div>
<div class="r" style="left:245px;top:682px;width:1239px;height:1.500px;background:#dfe6ec"></div>
<div class="r" style="left:245px;top:748px;width:1239px;height:1.500px;background:#eceff2"></div>
<div class="r" style="left:245px;top:782px;width:1239px;height:1.500px;background:#eceff2"></div>
<div class="r" style="left:245px;top:958px;width:1239px;height:1.500px;background:#f0f3f6"></div>
<div class="r" style="left:1488px;top:666px;width:7px;height:62px;background:#f2f2f2"></div>
<div class="k" style="left:251px;top:627px"></div><div class="k" style="left:251px;top:658px"></div><div class="k" style="left:251px;top:724px"></div><div class="k" style="left:251px;top:789px"></div><div class="k" style="left:251px;top:818px"></div><div class="k" style="left:251px;top:847px"></div><div class="k" style="left:251px;top:876px"></div><div class="k" style="left:251px;top:905px"></div><div class="k" style="left:251px;top:934px"></div>
<div class="t" style="left:280px;top:636px">#</div><div class="t" style="left:320px;top:636px">Item</div><div class="t" style="left:441px;top:636px;letter-spacing:-.05px">Description</div><div class="t" style="left:653px;top:636px">Brand</div><div class="t" style="left:713px;top:636px;letter-spacing:-.7px">QTY</div><div class="t" style="left:793px;top:629px">Case Per</div><div class="t" style="left:793px;top:644px">Pallet</div><div class="t" style="left:863px;top:629px">Num. of</div><div class="t" style="left:863px;top:644px">Pallets</div><div class="t" style="left:943px;top:636px">Case Rate</div><div class="t" style="left:1013px;top:636px">Rate</div><div class="t" style="left:1113px;top:636px">Amount</div><div class="t" style="left:1223px;top:636px">Tax</div><div class="t" style="left:1273px;top:636px">Settings</div><div class="t" style="left:1328px;top:636px">Avail</div><div class="t" style="left:1365px;top:636px">Status</div>
<div class="t" style="left:281px;top:668px">1</div><div class="t" style="left:321px;top:668px">Invent</div><div class="a" style="left:427px;top:668px"></div>
<svg class="ic bl" style="left:625px;top:659px;width:17px;height:17px"><use href="#pen"/></svg>
<div class="a" style="left:693px;top:668px"></div>
<div class="t" style="left:715px;top:669px">5</div><div class="d" style="left:780px;top:658px"></div>
<div class="t" style="left:795px;top:669px">5</div><div class="t" style="left:864px;top:669px">0.2</div><div class="w" style="left:922px;top:660px">!</div>
<div class="t" style="left:1015px;top:669px">$10.00</div><div class="la" style="left:1075px;top:658px">LA</div><div class="d" style="left:1100px;top:658px"></div><div class="t" style="left:1115px;top:669px">$30.00</div>
<div class="t" style="left:1224px;top:668px">Tax</div><div class="a" style="left:1258px;top:668px"></div><div class="t e" style="left:1285px;top:668px">Edit</div><div class="g" style="left:1331px;top:657px"></div><div class="t l" style="left:1370px;top:668px">Not Reserved</div>
<div class="t dc" style="left:761px;top:700px">Discount: -40.00% Original Price: $50.00</div>
<div class="t" style="left:281px;top:734px">2</div><div class="t" style="left:321px;top:734px">inv300</div><div class="a" style="left:427px;top:734px"></div>
<div class="a" style="left:693px;top:734px"></div>
<div class="t" style="left:715px;top:735px">80</div><div class="d" style="left:780px;top:724px"></div>
<div class="t" style="left:795px;top:735px">10</div><div class="t" style="left:864px;top:735px">0.8</div><div class="w" style="left:922px;top:726px">!</div>
<div class="t" style="left:1015px;top:735px">$1.00</div><div class="la" style="left:1075px;top:724px">CP</div><div class="d" style="left:1100px;top:724px"></div><div class="t" style="left:1115px;top:735px">$48.00</div>
<div class="t" style="left:1224px;top:734px">Tax</div><div class="a" style="left:1258px;top:734px"></div><div class="t e" style="left:1285px;top:734px">Edit</div><div class="g" style="left:1331px;top:723px"></div><div class="t l" style="left:1370px;top:734px">Not Reserved</div>
<div class="t dc" style="left:761px;top:766px">Discount: -40.00% Original Price: $80.00</div>
<div class="a" style="left:427px;top:798px"></div><div class="a" style="left:427px;top:827px"></div><div class="a" style="left:427px;top:856px"></div><div class="a" style="left:427px;top:885px"></div><div class="a" style="left:427px;top:914px"></div><div class="a" style="left:427px;top:943px"></div>

<!-- footer -->
<div class="tg" style="left:244px;top:987px"></div><div class="t" style="left:278px;top:992px">Layaway</div>
<div class="tg" style="left:343px;top:987px"></div><div class="t" style="left:377px;top:992px">Is Dropship</div>
<div class="tg off" style="left:456px;top:987px"></div><div class="t h" style="left:490px;top:992px;letter-spacing:-.15px">Vendor Pickup Order</div>
<div class="tg" style="left:619px;top:987px"></div><div class="t" style="left:653px;top:992px">Charge CC</div>
<div class="tg" style="left:730px;top:987px"></div><div class="t" style="left:764px;top:992px;letter-spacing:0">Do not display on shipping schedule</div>
<div class="tg" style="left:244px;top:1010px"></div><div class="t" style="left:278px;top:1015px;letter-spacing:0">Require customer acknowledgment</div>
<div class="tg on" style="left:497px;top:1010px"></div><div class="t" style="left:529px;top:1015px">Show Order Total on PDF/WEB</div>
<div class="tg on" style="left:711px;top:1010px"></div><div class="t" style="left:743px;top:1015px">Show item amount on PDF\WEB</div>
<div class="t" style="left:1255px;top:1005px;color:#888;font-size:11px">TAX</div>
<div class="r" style="left:1276px;top:992px;width:90px;height:25px;background:#f5f5f5;border-radius:2px"></div>
<div class="t" style="left:1281px;top:1005px">Test Tax</div><div class="a" style="left:1356px;top:1005px"></div>
<div class="t" style="left:1369px;top:1005px">(5 %)</div>
<div class="t" style="left:1420px;top:1005px">Discount: <span class="u">0%</span></div>
<div class="r" style="left:236px;top:1031px;width:1272px;height:1px;background:#e2e2e2"></div>

<!-- right panel win 2 -->
<div class="t pt" style="left:1522px;top:532px">THIS ORDER</div>
<div class="t pt" style="left:1617px;top:532px">CUSTOMER</div>
<div class="t pt" style="left:1725px;top:532px">LOGS</div>
<div class="r" style="left:1509px;top:550px;width:279px;height:1px;background:#e6e6e6"></div>
<div class="r" style="left:1602px;top:549px;width:92px;height:2px;background:#00609c"></div>
<div class="t" style="left:1525px;top:569px;color:#444;font-size:12.500px">SUMMARY</div>
<div class="t sv" style="left:1525px;top:598px">Credit Limit:</div><div class="t" style="right:149px;top:598px">$70,000.00</div>
<div class="t sv" style="left:1525px;top:613px">Available Credit:</div><div class="t" style="right:149px;top:613px">$-132,676.08</div>
<div class="t sv" style="left:1525px;top:627px">Open Invoices:</div><div class="t" style="right:149px;top:627px">$95,248.05</div>
<div class="t sv" style="left:1525px;top:642px">Credit:</div><div class="t" style="right:149px;top:642px">$-6,721.28</div>
<div class="t sv" style="left:1525px;top:657px">Deposits:</div><div class="t" style="right:149px;top:657px">$13,311.33</div>
<div class="t sv" style="left:1525px;top:672px">Open Balance:</div><div class="t" style="right:149px;top:672px">$104,371.77</div>
<div class="t sv" style="left:1525px;top:687px">Open Sale Orders:</div><div class="t" style="right:149px;top:687px">184</div>
<div class="t sv" style="left:1525px;top:702px">Phone:</div><div class="t" style="right:149px;top:702px">430574389656</div>
<div class="t sv" style="left:1525px;top:717px">Email:</div>
<div class="t sv" style="left:1525px;top:731px">Card on file:</div><div class="t" style="right:149px;top:732px">Master Card **5454</div>
<div class="r" style="left:1509px;top:747px;width:279px;height:2px;background:#eee"></div>
<svg class="ic" style="left:1523px;top:757px;width:16px;height:16px;color:#e53935"><use href="#lock"/></svg>
<div class="t" style="left:1542px;top:765px;font-weight:bold;color:#333;letter-spacing:-.4px">ACCOUNT ON HOLD</div>
<div class="t btxt" style="left:1525px;top:788px;letter-spacing:-.4px">Past Due:</div><div class="t vl" style="left:1711px;top:788px">$94,692.60</div>
<div class="t btxt" style="left:1525px;top:807px;letter-spacing:-.4px">Over Credit Limit:</div><div class="t vl" style="left:1711px;top:807px">$132,757.98</div>
<div class="t" style="left:1535px;top:822px">Open SO:</div><div class="t vl" style="left:1711px;top:822px">$289,660.75</div>
<div class="t" style="left:1535px;top:837px">Open Invoices:</div><div class="t vl" style="left:1711px;top:837px">$95,248.05</div>
<div class="t" style="left:1535px;top:852px">Available Credit Limit:</div><div class="t vl" style="left:1711px;top:852px">$-132,676.08</div>
<div class="t btxt" style="left:1525px;top:871px;letter-spacing:-.4px">Manual Hold:</div>
<div class="t" style="left:1525px;top:886px">tytu</div>
<div class="b" style="left:1525px;top:912px;width:60px;height:26px">CARD</div>
<div class="b" style="left:1589px;top:912px;width:58px;height:26px">CHECK</div>
<div class="b" style="left:1650px;top:912px;width:58px;height:26px">CASH</div>
<div class="b" style="left:1711px;top:912px;width:60px;height:26px">CRDT</div>
<div class="r" style="left:1509px;top:949px;width:279px;height:1px;background:#e6e6e6"></div>
<div class="t btxt" style="left:1517px;top:966px;letter-spacing:-.4px">Delivery</div>
<div class="t" style="left:1517px;top:981px">Total Pallets:</div><div class="t" style="right:156px;top:981px">1.0</div>
<div class="t" style="left:1517px;top:996px">Total Weight:</div><div class="t" style="right:156px;top:996px">85 lb</div>
<div class="r" style="left:1517px;top:1012px;width:247px;height:1px;background:#e6e6e6"></div>
<div class="t btxt" style="left:1517px;top:1028px;letter-spacing:-.4px">Open Balance</div>
<div class="t" style="left:1517px;top:1043px">Sub Total:</div><div class="t" style="right:156px;top:1043px">$78.00</div>
<div class="r" style="left:1776px;top:965px;width:6px;height:65px;background:#f2f2f2"></div>
</body></html>
